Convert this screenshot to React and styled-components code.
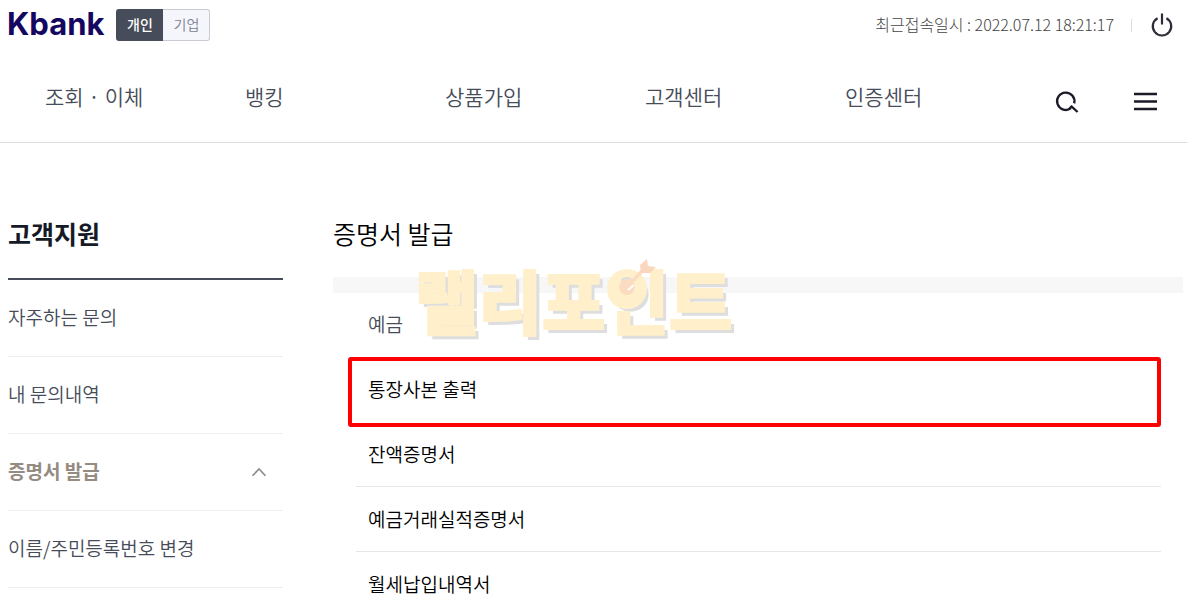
import React, { useState } from "react";
import styled, { createGlobalStyle, css } from "styled-components";

const GlobalStyle = createGlobalStyle`
  * {
    box-sizing: border-box;
  }

  html {
    scrollbar-width: none;
  }

  body {
    margin: 0;
    background: #fff;
    color: #000;
    font-family: "Noto Sans CJK KR", "Noto Sans", sans-serif;
    font-weight: 350;
  }

  button {
    padding: 0;
    border: 0;
    background: none;
    font: inherit;
    cursor: pointer;
  }

  a {
    color: inherit;
    text-decoration: none;
  }

  ul {
    margin: 0;
    padding: 0;
    list-style: none;
  }
`;

const Header = styled.header`
  border-bottom: 1px solid #dcdcdc;
`;

const TopBar = styled.div`
  display: flex;
  align-items: center;
  height: 50px;
  padding: 0 12px 0 7px;
`;

const Logo = styled.a`
  color: #15065f;
  font-family: Inter, sans-serif;
  font-size: 31px;
  font-weight: 700;
  line-height: 46px;
  padding-bottom: 2px;
`;

const Toggle = styled.div`
  display: flex;
  margin-left: 12px;
`;

const ToggleButton = styled.button`
  width: 47px;
  height: 32px;
  padding-bottom: 3px;
  border: 1px solid #c9cad2;
  border-left: 0;
  border-radius: 0 3px 3px 0;
  background: #f5f6fb;
  color: #7c8090;
  font-size: 14px;
  line-height: 26px;

  ${(props) =>
    props.$active &&
    css`
      border: 0;
      border-radius: 3px 0 0 3px;
      background: #464c59;
      color: #fff;
      font-weight: 500;
    `}
`;

const Session = styled.div`
  display: flex;
  align-items: center;
  gap: 17px;
  margin-left: auto;
  color: #444;
  font-size: 16px;
  font-weight: 300;
  line-height: 24px;
`;

const SessionTime = styled.span`
  padding-bottom: 3px;
`;

const Divider = styled.span`
  width: 1px;
  height: 13px;
  background: #dcdcdc;
`;

const IconButton = styled.button`
  display: flex;
  align-items: center;
  justify-content: center;
  width: 26px;
  height: 26px;
`;

const NavBar = styled.nav`
  display: flex;
  align-items: center;
  height: 92px;
  padding: 0 29px 0 45px;
`;

const NavList = styled.ul`
  display: flex;
  flex: 1;
`;

const NavItem = styled.li`
  width: 200px;
  color: #464c59;
  font-size: 21px;
  line-height: 32px;
`;

const NavTools = styled.div`
  display: flex;
  gap: 52px;
  padding-top: 12px;
`;

const Body = styled.div`
  display: flex;
  gap: 50px;
  padding: 74px 4px 0 8px;
`;

const Sidebar = styled.aside`
  flex: 0 0 275px;
`;

const SideTitle = styled.h2`
  margin: 0;
  height: 63px;
  border-bottom: 2px solid #464c59;
  color: #151a26;
  font-size: 25px;
  font-weight: 700;
  line-height: 32px;
`;

const SideLink = styled.a`
  display: flex;
  align-items: center;
  justify-content: space-between;
  height: 77px;
  padding: 0 16px 3px 0;
  border-bottom: 1px solid #eee;
  color: ${(props) => (props.$active ? "#968b80" : "#464c59")};
  font-size: 19px;
  font-weight: ${(props) => (props.$active ? 700 : 350)};
`;

const Main = styled.main`
  position: relative;
  flex: 1;
`;

const Title = styled.h1`
  margin: 0;
  height: 60px;
  font-size: 25px;
  font-weight: 350;
  line-height: 32px;
`;

const Band = styled.div`
  height: 16px;
  background: #f7f7f7;
`;

const CertList = styled.ul`
  padding: 0 22px 0 23px;
`;

const CertRow = styled.li`
  position: relative;
  display: flex;
  align-items: center;
  height: ${(props) => (props.$heading ? 64 : 65)}px;
  padding: 0 0 2px 12px;
  border-bottom: 1px solid;
  border-color: ${(props) => (props.$heading || props.$marked ? "transparent" : "#e6e6e6")};
  color: ${(props) => (props.$heading ? "#464c59" : "#000")};
  font-size: 19px;

  ${(props) =>
    props.$marked &&
    css`
      &::after {
        content: "";
        position: absolute;
        inset: 0 0 -6px -8px;
        border: 4px solid #f00;
        border-radius: 3px;
        pointer-events: none;
      }
    `}
`;

const Watermark = styled.div`
  position: absolute;
  top: 32px;
  left: 82px;
  color: #fff0cb;
  font-size: 69px;
  font-weight: 900;
  line-height: 100px;
  white-space: nowrap;
  text-shadow: 4px 4px 0 #dedede;
  -webkit-text-stroke: 2px #fff0cb;
  pointer-events: none;
`;

const Dart = styled.svg`
  position: absolute;
  top: 9px;
  left: 190px;
`;

const menus = ["조회 · 이체", "뱅킹", "상품가입", "고객센터", "인증센터"];

const sideMenus = [
  { label: "자주하는 문의" },
  { label: "내 문의내역" },
  { label: "증명서 발급", active: true },
  { label: "이름/주민등록번호 변경" },
];

const certificates = [
  { label: "통장사본 출력", marked: true },
  { label: "잔액증명서" },
  { label: "예금거래실적증명서" },
  { label: "월세납입내역서" },
];

function PowerIcon() {
  return (
    <svg width="26" height="26" viewBox="0 0 26 26" fill="none" stroke="#2c2d38" strokeWidth="2.2">
      <path d="M8.6 6.2a9.2 9.2 0 1 0 8.8 0" />
      <path d="M13 1.5v11" />
    </svg>
  );
}

function SearchIcon() {
  return (
    <svg width="26" height="26" viewBox="0 0 26 26" fill="none" stroke="#1a1a28" strokeWidth="2.3">
      <path d="M20.2 14.4A8.7 8.7 0 1 0 17 19.2" />
      <path d="M14.8 20.2l3.4-3.4M17.4 17.4l6.2 5.6" />
    </svg>
  );
}

function MenuIcon() {
  return (
    <svg width="26" height="26" viewBox="0 0 26 26" stroke="#1a1a28" strokeWidth="2.4">
      <path d="M2 5h23M2 12.5h23M2 20h23" />
    </svg>
  );
}

function ChevronUp() {
  return (
    <svg width="16" height="10" viewBox="0 0 16 10" fill="none" stroke="#8c8c8c" strokeWidth="1.6">
      <path d="M1.5 9.8L8 3l6.5 6.8" />
    </svg>
  );
}

function DartMark() {
  return (
    <Dart width="60" height="60" viewBox="0 0 60 60">
      <circle cx="22" cy="31" r="20" fill="#fff0cb" />
      <ellipse cx="22" cy="22" rx="6" ry="3" fill="#dedede" />
      <circle cx="22" cy="29" r="8" fill="#fbdcc0" />
      <path d="M22 29L38 12" stroke="#fbdcc0" strokeWidth="4" />
      <path d="M23 32l6-5" stroke="#fff" strokeWidth="2" />
      <path d="M35 7l7-6 1 7 8 1-6 6-9 0z" fill="#fad6be" />
    </Dart>
  );
}

export default function App() {
  const [type, setType] = useState("개인");

  return (
    <>
      <GlobalStyle />
      <Header>
        <TopBar>
          <Logo href="#home">Kbank</Logo>
          <Toggle>
            {["개인", "기업"].map((name) => (
              <ToggleButton key={name} $active={type === name} onClick={() => setType(name)}>
                {name}
              </ToggleButton>
            ))}
          </Toggle>
          <Session>
            <SessionTime>최근접속일시 : 2022.07.12 18:21:17</SessionTime>
            <Divider />
            <IconButton aria-label="로그아웃">
              <PowerIcon />
            </IconButton>
          </Session>
        </TopBar>
        <NavBar>
          <NavList>
            {menus.map((menu) => (
              <NavItem key={menu}>
                <a href="#menu">{menu}</a>
              </NavItem>
            ))}
          </NavList>
          <NavTools>
            <IconButton aria-label="검색">
              <SearchIcon />
            </IconButton>
            <IconButton aria-label="전체메뉴">
              <MenuIcon />
            </IconButton>
          </NavTools>
        </NavBar>
      </Header>
      <Body>
        <Sidebar>
          <SideTitle>고객지원</SideTitle>
          {sideMenus.map((item) => (
            <SideLink key={item.label} href="#support" $active={item.active}>
              {item.label}
              {item.active && <ChevronUp />}
            </SideLink>
          ))}
        </Sidebar>
        <Main>
          <Title>증명서 발급</Title>
          <Band />
          <CertList>
            <CertRow $heading>예금</CertRow>
            {certificates.map((item) => (
              <CertRow key={item.label} $marked={item.marked}>
                <a href="#certificate">{item.label}</a>
              </CertRow>
            ))}
          </CertList>
          <Watermark aria-hidden="true">
            랠리포인트
            <DartMark />
          </Watermark>
        </Main>
      </Body>
    </>
  );
}
